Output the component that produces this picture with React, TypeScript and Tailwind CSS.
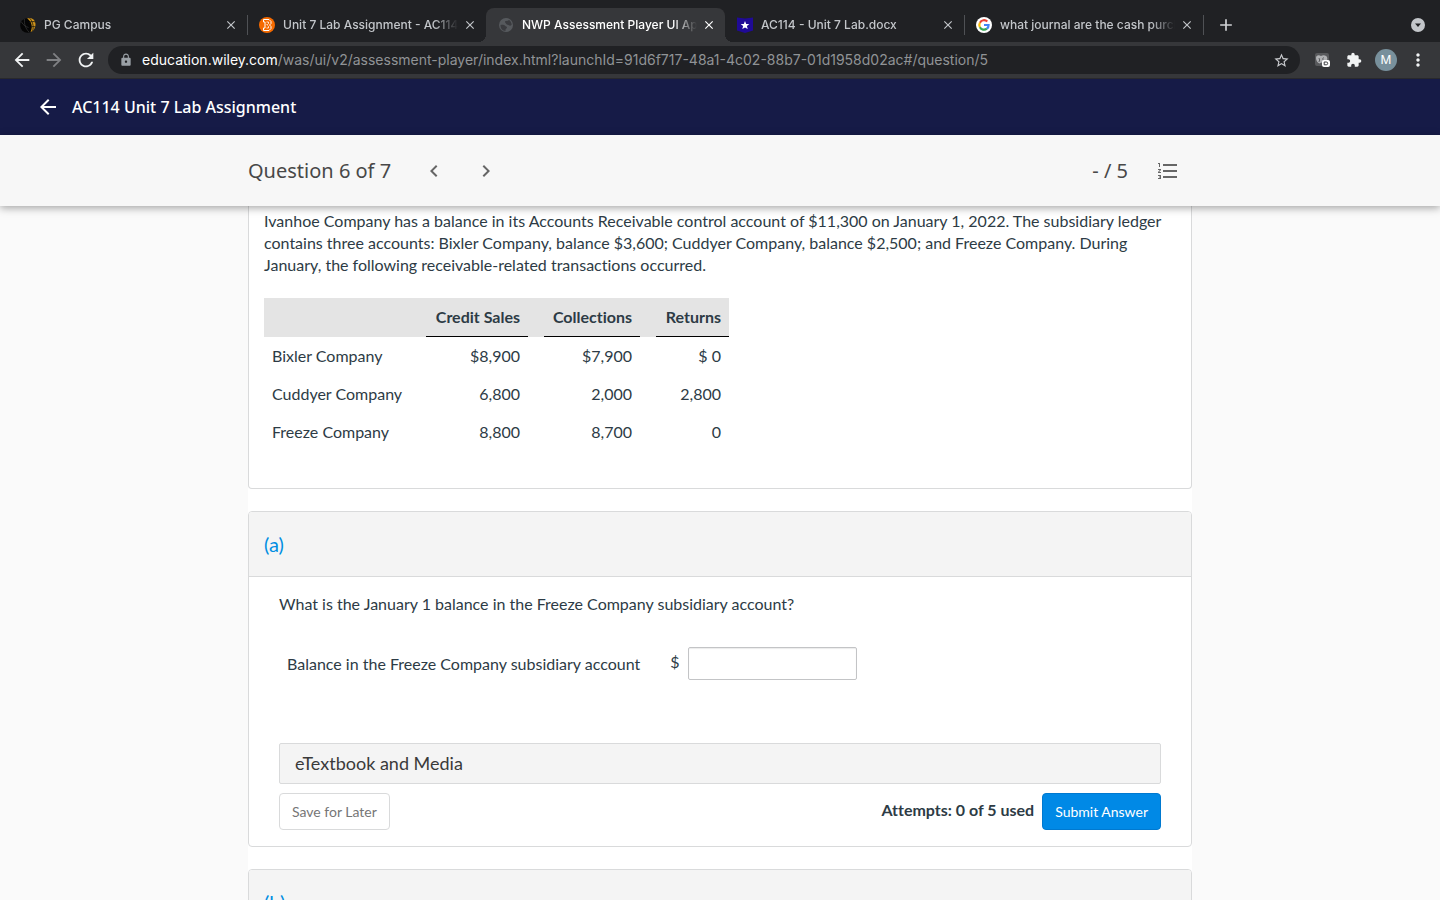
import type { ReactNode } from 'react';
import {
    MdAdd,
    MdArrowBack,
    MdArrowForward,
    MdChevronLeft,
    MdChevronRight,
    MdClose,
    MdExtension,
    MdFormatListNumbered,
    MdLock,
    MdMoreVert,
    MdRefresh,
    MdStarBorder,
} from 'react-icons/md';

interface BrowserTab {
    title: string;
    icon: ReactNode;
    active?: boolean;
    divider?: boolean;
}

function CampusIcon() {
    return (
        <svg viewBox="0 0 16 16" className="size-4 shrink-0">
            <circle cx="7.5" cy="8.5" r="7.3" fill="#050505" />
            <path d="M7 1.5C9 .5 12 .8 13.500 2.500 16 5 16 9 14.500 11.500 13.500 13.600 12 14.600 10.500 15 12 12 12.200 9 11 6 10 3.700 8.500 2.500 7 1.500z" fill="#d0941a" />
            <path d="M9.500 1c3 3 4.500 8 3.200 13M9 5.500c2.500-1.200 4.500-1.200 6.500-.5M11 10c1.500-.6 3-.6 4.500-.2" stroke="#15140f" strokeWidth=".8" fill="none" />
            <path d="M1.500 5c1.500 3 4 4.500 7 5.500M4.500 2c-.5 5 1 9.500 4.500 13" stroke="#3f3f3f" strokeWidth=".6" fill="none" />
        </svg>
    );
}

function BrightspaceIcon() {
    return (
        <svg viewBox="0 0 16 16" className="size-4 shrink-0">
            <circle cx="8" cy="8" r="8" fill="#f56a00" />
            <path d="M4.500 2.500h5.500l2 2v2L10.500 8l1.500 1.500v2l-2 2H4.500v-2.500H6V5H4.500z" fill="none" stroke="#fff" strokeWidth="1" />
            <path d="M7.500 5h2v1.500L8.500 7.500H7.500M8.500 8.500l1 1V11h-2" fill="none" stroke="#fff" strokeWidth=".8" />
        </svg>
    );
}

function GlobeIcon() {
    return (
        <svg viewBox="0 0 16 16" className="size-4 shrink-0">
            <circle cx="8" cy="8" r="7" fill="#56595d" />
            <path d="M2.500 8c1.800-.3 3.800-.2 4.600.8.500.9 1.800.5 1.900 1.600 0 1-1.500 1.200-1.500 2.300v1.200C4.500 13.800 2.500 11.500 2.500 8zM8 4c1.300 0 2.300-.4 3-1 1.500.9 2.600 2.600 2.700 4.700-.9 1-1.900 1.300-2.700.6-.7-.6-2.200-.2-2.700-1.200C8.100 6.200 7 5.800 7 5c0-.6.400-1 1-1z" fill="#3a3b3f" />
        </svg>
    );
}

function ShieldIcon() {
    return (
        <svg viewBox="0 0 16 16" className="size-4 shrink-0">
            <path d="M0 .5 8 1.500l8-1v13L8 16l-8-2.500z" fill="#1f0a96" />
            <path d="m8 4 1.200 2.900 3.100.2-2.400 2 .8 3L8 10.500l-2.700 1.600.8-3-2.400-2 3.100-.2z" fill="#fff" />
        </svg>
    );
}

function GoogleIcon() {
    return (
        <svg viewBox="0 0 16 16" className="size-4 shrink-0">
            <circle cx="8" cy="8" r="8" fill="#fff" />
            <g fill="none" strokeWidth="2.200">
                <path d="M11.300 4.500A4.700 4.700 0 0 0 3.900 5.700" stroke="#ea4335" />
                <path d="M3.900 5.700a4.700 4.700 0 0 0 0 4.600" stroke="#fbbc05" />
                <path d="M3.900 10.300a4.700 4.700 0 0 0 7 1.400" stroke="#34a853" />
                <path d="M10.900 11.700A4.500 4.500 0 0 0 12.600 8H8" stroke="#4285f4" />
            </g>
        </svg>
    );
}

// extension icon: greyed mask with a small badge in the corner
function MaskExtensionIcon() {
    return (
        <svg viewBox="0 0 16 16" className="size-4 shrink-0">
            <rect x="1" y="1" width="14" height="13" rx="2" fill="#58595c" />
            <path d="M2 6c0-2.500 2.500-3.500 5-2 2.500-1.500 6-.5 6.300 2 .2 3-1 4.500-3 5L7.500 10.500 5.500 11.500C3.500 11 2 8.500 2 6z" fill="#b0b1b4" />
            <path d="M4.800 6c1 .8 1 3 0 4M9.500 5.500c-.9.900-.9 2.200.1 3" stroke="#55565a" strokeWidth="1" fill="none" />
            <rect x="8" y="8" width="8" height="7" rx="2" fill="#fff" />
            <path d="M10.200 10h2.100a1.400 1.400 0 0 1 0 2.800h-2.100z" fill="none" stroke="#3a3b3e" strokeWidth="1" />
        </svg>
    );
}

const tabs: BrowserTab[] = [
    { title: 'PG Campus', icon: <CampusIcon />, divider: true },
    { title: 'Unit 7 Lab Assignment - AC114', icon: <BrightspaceIcon /> },
    { title: 'NWP Assessment Player UI App', icon: <GlobeIcon />, active: true },
    { title: 'AC114 - Unit 7 Lab.docx', icon: <ShieldIcon />, divider: true },
    { title: 'what journal are the cash purch', icon: <GoogleIcon />, divider: true },
];

const rows = [
    { name: 'Bixler Company', sales: '$8,900', collections: '$7,900', returns: '$ 0' },
    { name: 'Cuddyer Company', sales: '6,800', collections: '2,000', returns: '2,800' },
    { name: 'Freeze Company', sales: '8,800', collections: '8,700', returns: '0' },
];

function TabItem({ tab }: { tab: BrowserTab }) {
    return (
        <div
            className={
                tab.active
                    ? 'relative flex h-[34px] w-[239px] items-center rounded-t-lg bg-[#36373a] pl-3 pr-2 text-white'
                    : 'relative flex h-[34px] w-[239px] items-center pl-3 pr-2 text-[#c3c6ca]'
            }
        >
            {tab.active && (
                <>
                    <span className="absolute -left-2 bottom-0 size-2 bg-[radial-gradient(circle_at_0_0,transparent_8px,#36373a_8px)]" />
                    <span className="absolute -right-2 bottom-0 size-2 bg-[radial-gradient(circle_at_100%_0,transparent_8px,#36373a_8px)]" />
                </>
            )}
            {tab.icon}
            <span className="ml-2 mr-1 min-w-0 flex-1 overflow-hidden whitespace-nowrap text-xs font-medium [mask-image:linear-gradient(to_right,#000_calc(100%-24px),transparent)]">
                {tab.title}
            </span>
            <button aria-label={`Close ${tab.title}`} className="flex size-4 items-center justify-center">
                <MdClose size={14} />
            </button>
            {tab.divider && <span className="absolute -right-px top-[7px] h-5 w-px bg-[#4f5155]" />}
        </div>
    );
}

function BrowserChrome() {
    return (
        <div className="shrink-0 font-[Inter,sans-serif]">
            <div className="flex h-[42px] items-end bg-[#202124] pl-2 pr-[14px]">
                {tabs.map((tab) => (
                    <TabItem key={tab.title} tab={tab} />
                ))}
                <button aria-label="New tab" className="ml-[13px] flex h-[34px] w-5 items-center justify-center text-[#d0d2d5]">
                    <MdAdd size={20} />
                </button>
                <button aria-label="Search tabs" className="ml-auto flex h-[34px] items-center">
                    <svg viewBox="0 0 16 16" className="size-4">
                        <circle cx="8" cy="8" r="7" fill="#c3c6ca" />
                        <path d="M5 6.500h6L8 10z" fill="#202124" />
                    </svg>
                </button>
            </div>
            <div className="flex h-[37px] items-center border-b border-[#29292c] bg-[#36373a] pl-[11px] pr-3 text-[#f1f3f4]">
                <div className="flex items-center gap-[10px]">
                    <button aria-label="Back"><MdArrowBack size={22} /></button>
                    <button aria-label="Forward" className="text-[#808184]"><MdArrowForward size={22} /></button>
                    <button aria-label="Reload"><MdRefresh size={22} /></button>
                </div>
                <div className="ml-[11px] flex h-7 min-w-0 flex-1 items-center rounded-full bg-[#202124] px-[10px]">
                    <MdLock size={14} className="ml-px shrink-0 text-[#9aa0a6]" />
                    <p className="ml-[9px] min-w-0 flex-1 overflow-hidden whitespace-nowrap text-sm text-[#909396]">
                        <span className="text-white">education.wiley.com</span>
                        /was/ui/v2/assessment-player/index.html?launchId=91d6f717-48a1-4c02-88b7-01d1958d02ac#/question/5
                    </p>
                    <button aria-label="Bookmark" className="text-[#c9cbce]"><MdStarBorder size={17} /></button>
                </div>
                <div className="flex items-center">
                    <button aria-label="Privacy extension" className="ml-[14px]"><MaskExtensionIcon /></button>
                    <button aria-label="Extensions" className="ml-4"><MdExtension size={16} /></button>
                    <button aria-label="Profile" className="ml-[13px] size-[22px] rounded-full bg-[#78909c] text-xs text-white">M</button>
                    <button aria-label="Menu" className="ml-[11px]"><MdMoreVert size={20} /></button>
                </div>
            </div>
        </div>
    );
}

function PartHeader({ label }: { label: string }) {
    return (
        <div className="flex h-[65px] items-center border-b border-[#d9dadb] bg-[#f4f4f4] px-[15px]">
            <h2 className="text-xl text-[#008ee2]">{label}</h2>
        </div>
    );
}

function IntroCard() {
    return (
        <section className="rounded-b border border-t-0 border-[#d9dadb] bg-white px-[15px] pb-[37px] pt-1">
            <p>
                Ivanhoe Company has a balance in its Accounts Receivable control account of $11,300 on January 1, 2022. The subsidiary ledger
                contains three accounts: Bixler Company, balance $3,600; Cuddyer Company, balance $2,500; and Freeze Company. During
                January, the following receivable-related transactions occurred.
            </p>
            <table className="mt-[22px] w-[465px] table-fixed border-separate border-spacing-0 text-right">
                <colgroup>
                    <col className="w-[162px]" />
                    <col className="w-[102px]" />
                    <col className="w-4" />
                    <col className="w-24" />
                    <col className="w-4" />
                    <col className="w-[73px]" />
                </colgroup>
                <thead>
                    <tr className="h-[39px] bg-[#e4e4e4]">
                        <td />
                        <th className="whitespace-nowrap border-b border-black px-2">Credit Sales</th>
                        <td />
                        <th className="border-b border-black px-2">Collections</th>
                        <td />
                        <th className="border-b border-black px-2">Returns</th>
                    </tr>
                </thead>
                <tbody>
                    {rows.map((row) => (
                        <tr key={row.name} className="h-[38px]">
                            <td className="px-2 text-left">{row.name}</td>
                            <td className="px-2">{row.sales}</td>
                            <td />
                            <td className="px-2">{row.collections}</td>
                            <td />
                            <td className="px-2">{row.returns}</td>
                        </tr>
                    ))}
                </tbody>
            </table>
        </section>
    );
}

function PartA() {
    return (
        <section className="mt-[22px] overflow-hidden rounded border border-[#d9dadb] bg-white">
            <PartHeader label="(a)" />
            <div className="px-[30px] pb-4 pt-4">
                <p>What is the January 1 balance in the Freeze Company subsidiary account?</p>
                <div className="mt-8 flex items-center pl-2">
                    <label htmlFor="balance">Balance in the Freeze Company subsidiary account</label>
                    <span className="ml-[30px] pb-1">$</span>
                    <input
                        id="balance"
                        type="text"
                        className="ml-2 h-[33px] w-[169px] rounded-xs border border-[#c3c4c6] px-2 shadow-[inset_0_1px_1px_rgba(0,0,0,0.08)]"
                    />
                </div>
                <button className="mt-[63px] block h-[41px] w-full rounded-xs border border-[#d9dadb] bg-[#f4f4f4] px-[15px] pb-0.5 text-left text-lg text-[#3a3a3a]">
                    eTextbook and Media
                </button>
                <div className="mt-[9px] flex items-center justify-between">
                    <button className="h-[37px] rounded border border-[#d9dadb] px-3 text-sm text-[#767676]">Save for Later</button>
                    <div className="flex items-center gap-2">
                        <span className="pb-1 font-bold">Attempts: 0 of 5 used</span>
                        <button className="h-[37px] rounded border border-[#0079d0] bg-[#0089e6] px-3 text-sm text-white">Submit Answer</button>
                    </div>
                </div>
            </div>
        </section>
    );
}

export default function App() {
    return (
        <div className="flex h-screen flex-col overflow-hidden bg-[#fafafa]">
            <BrowserChrome />
            <header className="flex h-14 shrink-0 items-center gap-3 bg-[#161b47] px-9 font-['Noto_Sans',sans-serif] text-white">
                <button aria-label="Back to course"><MdArrowBack size={24} /></button>
                <h1 className="font-medium">AC114 Unit 7 Lab Assignment</h1>
            </header>
            <div className="relative z-10 h-[71px] shrink-0 bg-[#f7f7f7] font-['Noto_Sans',sans-serif] text-xl text-[#484848] shadow-[0_2px_8px_rgba(0,0,0,0.35)]">
                <div className="mx-auto flex h-full max-w-[944px] items-center pr-3">
                    <span>Question 6 of 7</span>
                    <button aria-label="Previous question" className="ml-[31px] text-[#666]"><MdChevronLeft size={24} /></button>
                    <button aria-label="Next question" className="ml-7 text-[#666]"><MdChevronRight size={24} /></button>
                    <span className="ml-auto">- / 5</span>
                    <button aria-label="Question list" className="ml-7 text-[#666]"><MdFormatListNumbered size={24} /></button>
                </div>
            </div>
            <main className="mx-auto min-h-0 w-full max-w-[944px] flex-1 overflow-hidden bg-white font-[Lato,sans-serif] text-base leading-[22px] text-[#2d3b45] [font-variant-ligatures:none]">
                <IntroCard />
                <PartA />
                <section className="mt-[22px] overflow-hidden rounded border border-[#d9dadb] bg-white">
                    <PartHeader label="(b)" />
                </section>
            </main>
        </div>
    );
}
